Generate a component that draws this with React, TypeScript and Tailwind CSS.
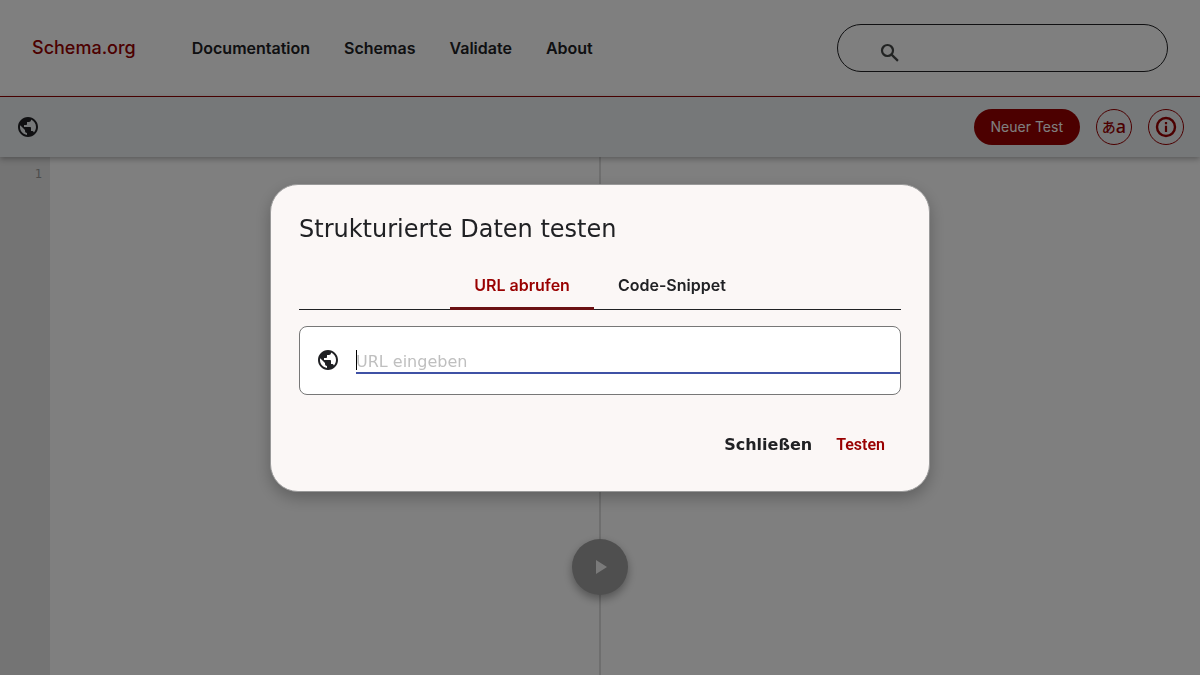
import { useState } from "react";
import { MdPlayArrow, MdPublic } from "react-icons/md";

const links = ["Documentation", "Schemas", "Validate", "About"];
const tabs = ["URL abrufen", "Code-Snippet"];

function SearchIcon() {
	return (
		<svg
			viewBox="0 0 24 24"
			className="size-6 fill-none stroke-[#444746] stroke-[2.2]"
		>
			<circle cx="9.5" cy="9.5" r="5.5" />
			<path d="M13.6 13.6L19.9 19.9" />
		</svg>
	);
}

function InfoIcon() {
	return (
		<svg viewBox="0 0 24 24" className="size-6 fill-[#990000]">
			<circle
				cx="12"
				cy="12"
				r="9"
				className="fill-none stroke-[#990000] stroke-[2.4]"
			/>
			<path d="M10.9 10.8h2.2V17h-2.2zM10.9 7h2.2v2.2h-2.2z" />
		</svg>
	);
}

function Header() {
	return (
		<header className="flex h-24 items-center border-b border-[#990000] px-8 box-content">
			<a href="#" className="mr-14 text-lg font-medium text-[#990000]">
				Schema.org
			</a>
			<nav className="flex grow gap-[34px] font-semibold">
				{links.map((link) => (
					<a href="#" key={link}>
						{link}
					</a>
				))}
			</nav>
			<form className="flex h-12 w-[331px] items-center rounded-full border border-[#202124] pl-10 pt-2.5">
				<button type="submit" aria-label="Search">
					<SearchIcon />
				</button>
				<input
					type="search"
					aria-label="Search"
					className="min-w-0 grow px-2 outline-none"
				/>
			</form>
		</header>
	);
}

function Toolbar({ setShowModal }) {
	return (
		<div className="relative z-10 flex h-[60px] items-center gap-4 bg-[#ecf0f3] px-4 shadow-[0_2px_6px_rgba(0,0,0,0.3)]">
			<MdPublic className="size-6" />
			<button
				className="ml-auto h-9 rounded-full bg-[#990000] px-[17px] text-sm text-white"
				onClick={() => setShowModal(true)}
			>
				Neuer Test
			</button>
			<button
				aria-label="Sprache"
				className="flex size-9 items-center justify-center rounded-full border border-[#990000] pb-0.5 text-[#990000]"
			>
				<span className="font-['Noto_Sans_CJK_JP',sans-serif] text-sm font-medium leading-5">
					あ
				</span>
				<span className="font-['Noto_Sans',sans-serif] text-lg font-medium leading-5">
					a
				</span>
			</button>
			<button
				aria-label="Info"
				className="flex size-9 items-center justify-center rounded-full border border-[#990000]"
			>
				<InfoIcon />
			</button>
		</div>
	);
}

function Modal({ setShowModal }) {
	const [tab, setTab] = useState(tabs[0]);
	const [url, setUrl] = useState("");

	return (
		<div className="fixed inset-0 z-50 flex items-center justify-center bg-black/50">
			<div
				role="dialog"
				aria-labelledby="title"
				className="w-[660px] max-w-full rounded-[28px] border border-[#999] bg-[#fbf7f6] p-7 shadow-[0_6px_16px_rgba(0,0,0,0.25)]"
			>
				<h1
					id="title"
					className="font-['DejaVu_Sans',sans-serif] text-2xl leading-8"
				>
					Strukturierte Daten testen
				</h1>
				{/*tabs*/}
				<div
					role="tablist"
					className="mt-4 flex justify-center border-b border-[#202124]"
				>
					{tabs.map((name) => (
						<button
							key={name}
							role="tab"
							aria-selected={tab === name}
							onClick={() => setTab(name)}
							className={
								tab === name
									? "-mb-px h-[49px] border-b-3 border-[#6b1113] px-6 pt-[3px] font-semibold text-[#990000]"
									: "h-12 px-6 font-semibold"
							}
						>
							{name}
						</button>
					))}
				</div>
				<form onSubmit={(event) => event.preventDefault()}>
					{/*body*/}
					<div className="mt-4 flex h-[69px] items-center rounded-lg border border-[#777] bg-white pl-4">
						<MdPublic className="size-6 shrink-0" />
						<div className="relative ml-4 flex grow">
							<input
								aria-label="URL"
								type="text"
								autoFocus
								value={url}
								onChange={(event) => setUrl(event.target.value)}
								placeholder="URL eingeben"
								className="h-7 min-w-0 grow border-b-2 border-[#3f51a5] pt-1 font-['DejaVu_Sans',sans-serif] outline-none placeholder:text-[#bfbfbf] placeholder-shown:caret-transparent"
							/>
							{/*caret of the empty field*/}
							{!url && (
								<span className="pointer-events-none absolute left-0 top-1 h-5 w-px bg-black"></span>
							)}
						</div>
					</div>
					{/*footer*/}
					<div className="mt-8 flex h-9 justify-end gap-6 pr-4">
						<button
							type="button"
							className="font-['DejaVu_Sans',sans-serif] font-bold"
							onClick={() => setShowModal(false)}
						>
							Schließen
						</button>
						<button
							type="submit"
							className="font-[Roboto,sans-serif] font-semibold text-[#990000]"
						>
							Testen
						</button>
					</div>
				</form>
			</div>
		</div>
	);
}

export default function App() {
	const [showModal, setShowModal] = useState(true);

	return (
		<div className="flex min-h-screen flex-col bg-white font-[Inter,sans-serif] text-[#202124]">
			<Header />
			<Toolbar setShowModal={setShowModal} />
			<main className="relative grid grow grid-cols-2">
				<div className="flex border-r border-[#ddd]">
					<div className="w-[50px] bg-[#e8e8e8] pr-2 pt-2 text-right font-['DejaVu_Sans_Mono',monospace] text-xs leading-[18px] text-[#999]">
						1
					</div>
				</div>
				<div className="border-l border-[#ddd]"></div>
				<button
					aria-label="Test starten"
					className="absolute bottom-20 left-1/2 flex size-14 -translate-x-1/2 items-center justify-center rounded-full bg-[#9e9e9e] text-[#f5f5f5] shadow-[0_4px_10px_rgba(0,0,0,0.35)]"
				>
					<MdPlayArrow className="size-6" />
				</button>
			</main>
			{showModal && <Modal setShowModal={setShowModal} />}
		</div>
	);
}
